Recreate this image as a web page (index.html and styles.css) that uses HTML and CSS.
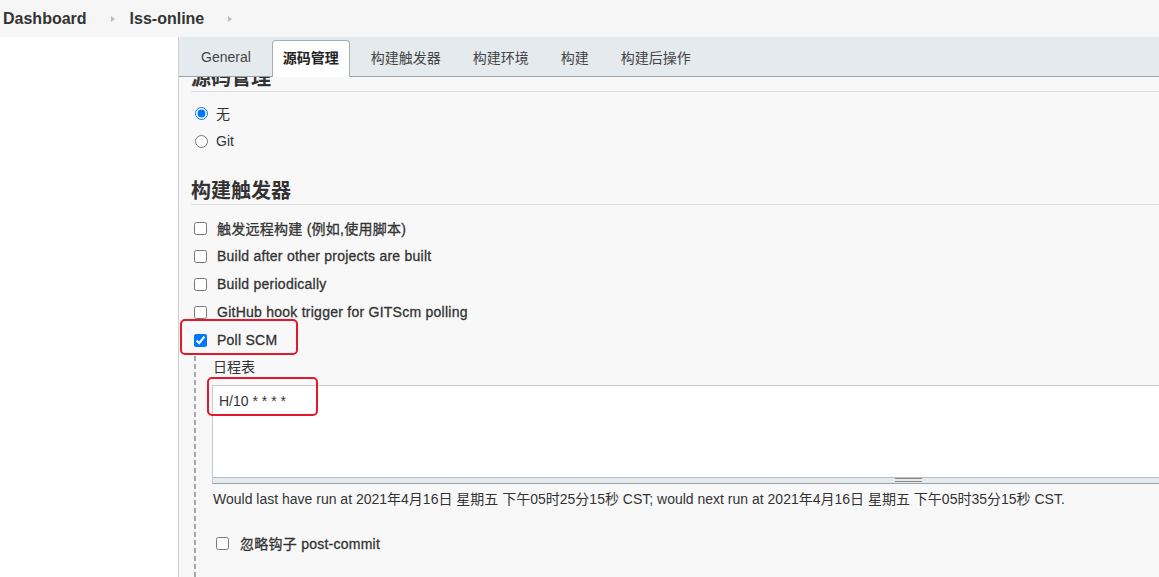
FILE: index.html
```html
<!DOCTYPE html>
<html lang="zh">
<head>
<meta charset="utf-8">
<title>lss-online Config</title>
<link rel="stylesheet" href="styles.css">
</head>
<body>
<div class="breadcrumb">
  <a class="crumb">Dashboard</a>
  <span class="sep"></span>
  <a class="crumb">lss-online</a>
  <span class="sep"></span>
</div>
<div class="main">
  <div class="sidebar"></div>
  <div class="panel">
    <div class="tabs">
      <div class="tab">General</div>
      <div class="tab active">源码管理</div>
      <div class="tab">构建触发器</div>
      <div class="tab">构建环境</div>
      <div class="tab">构建</div>
      <div class="tab">构建后操作</div>
    </div>
    <div class="content">
      <div class="section-title first">源码管理</div>
      <div class="radios">
        <label class="row"><input type="radio" name="scm" checked><span>无</span></label>
        <label class="row"><input type="radio" name="scm"><span>Git</span></label>
      </div>
      <div class="section-title second">构建触发器</div>
      <div class="checks">
        <label class="row"><input type="checkbox"><span class="lbl">触发远程构建 (例如,使用脚本)</span></label>
        <label class="row"><input type="checkbox"><span class="lbl">Build after other projects are built</span></label>
        <label class="row"><input type="checkbox"><span class="lbl">Build periodically</span></label>
        <label class="row"><input type="checkbox"><span class="lbl">GitHub hook trigger for GITScm polling</span></label>
        <label class="row marked"><input type="checkbox" checked><span class="lbl">Poll SCM</span><span class="annot annot-poll"></span></label>
      </div>
      <div class="nested">
        <div class="field-label">日程表</div>
        <div class="ta-wrap">
          <textarea class="schedule" spellcheck="false">H/10 * * * *</textarea>
          <div class="resizer"><span class="grip"></span></div>
          <span class="annot annot-ta"></span>
        </div>
        <div class="info">Would last have run at 2021年4月16日 星期五 下午05时25分15秒 CST; would next run at 2021年4月16日 星期五 下午05时35分15秒 CST.</div>
        <label class="row nested-row"><input type="checkbox"><span class="lbl">忽略钩子 post-commit</span></label>
      </div>
    </div>
  </div>
</div>
</body>
</html>
```
FILE: styles.css
```css
* { box-sizing: border-box; }
html, body {
  margin: 0;
  padding: 0;
  background: #ffffff;
  font-family: "Liberation Sans", "Noto Sans CJK SC", sans-serif;
  color: #333;
  overflow: hidden;
}
.breadcrumb {
  height: 37px;
  background: #f6f6f6;
  display: flex;
  align-items: center;
  padding-left: 3px;
}
.crumb {
  font-size: 16px;
  font-weight: bold;
  color: #333;
}
.sep {
  width: 0;
  height: 0;
  border-top: 3px solid transparent;
  border-bottom: 3px solid transparent;
  border-left: 4px solid #bbb;
  margin: 0 15px 0 24px;
}
.main {
  display: flex;
  height: 540px;
}
.sidebar {
  width: 178px;
  flex: none;
  background: #fff;
}
.panel {
  flex: 1;
  border-left: 1px solid #cfcfcf;
  background: #f8f8f8;
  display: flex;
  flex-direction: column;
  overflow: hidden;
  min-width: 0;
}
.tabs {
  height: 40px;
  flex: none;
  background: #e4eaee;
  border-bottom: 1px solid #9aa0a4;
  display: flex;
  align-items: flex-end;
  padding-left: 6px;
  position: relative;
  z-index: 2;
}
.tab {
  height: 37px;
  margin: 0 5px -1px 5px;
  padding: 0 10px 4px;
  font-size: 14px;
  color: #444;
  display: flex;
  align-items: center;
  border: 1px solid transparent;
  border-bottom: none;
  border-radius: 4px 4px 0 0;
}
.tab.active {
  background: #fff;
  border-color: #a9aeb2;
  font-weight: bold;
  color: #222;
}
.content {
  flex: 1;
  padding-left: 12px;
  overflow: hidden;
  min-height: 0;
}
.section-title {
  height: 27px;
  line-height: 26px;
  font-size: 20px;
  font-weight: bold;
  color: #333;
  border-bottom: 1px solid #dcdcdc;
}
.section-title.first { margin-top: -12px; }
.section-title.second { margin-top: 23px; }
.radios { margin-top: 7px; }
.checks { margin-top: 9px; }
.row {
  height: 28px;
  display: flex;
  align-items: center;
  padding-left: 4px;
  font-size: 14px;
  position: relative;
}
.row input {
  margin: 0;
  width: 13px;
  height: 13px;
  flex: none;
}
.row span { margin-left: 8px; }
.lbl {
  -webkit-text-stroke: 0.3px #333;
  letter-spacing: 0.25px;
}
.checks .row { padding-left: 3px; }
.checks .row .lbl { margin-left: 10px; }
.annot {
  position: absolute;
  border: 2px solid #e2192c;
  border-radius: 5px;
  pointer-events: none;
  margin: 0 !important;
}
.annot-poll {
  left: -11px;
  top: -7px;
  width: 118px;
  height: 36px;
}
.nested {
  margin-left: 3px;
  padding-left: 19px;
  padding-top: 3px;
  padding-bottom: 40px;
  background-image: repeating-linear-gradient(to bottom, #a8a8a8 0 5px, transparent 5px 8px);
  background-size: 2px 100%;
  background-repeat: no-repeat;
  background-position: 0 2px;
}
.field-label {
  height: 20px;
  line-height: 20px;
  font-size: 14px;
  color: #333;
}
.ta-wrap {
  position: relative;
  margin-top: 8px;
  margin-left: -1px;
  width: 1392px;
}
.schedule {
  display: block;
  width: 100%;
  height: 93px;
  margin: 0;
  border: 1px solid #c4cacd;
  border-bottom-color: #b9bfc3;
  background: #fff;
  resize: none;
  font-family: "Liberation Sans", "Noto Sans CJK SC", sans-serif;
  font-size: 14px;
  color: #333;
  padding: 7px 6px;
  line-height: 16px;
  outline: none;
}
.resizer {
  height: 6px;
  background: #e4eaee;
  border: 1px solid #c4cacd;
  border-top: none;
  border-bottom: 1px solid #9aa0a4;
  display: flex;
  justify-content: center;
  align-items: flex-start;
}
.grip {
  width: 27px;
  height: 4px;
  border-top: 1px solid #888;
  border-bottom: 1px solid #888;
}
.annot-ta {
  left: -5px;
  top: -8px;
  width: 111px;
  height: 39px;
}
.info {
  margin-top: 6px;
  height: 18px;
  line-height: 18px;
  font-size: 14px;
  color: #333;
}
.nested-row {
  margin-top: 21px;
  padding-left: 3px;
}
.nested-row .lbl { margin-left: 11px; }
```
